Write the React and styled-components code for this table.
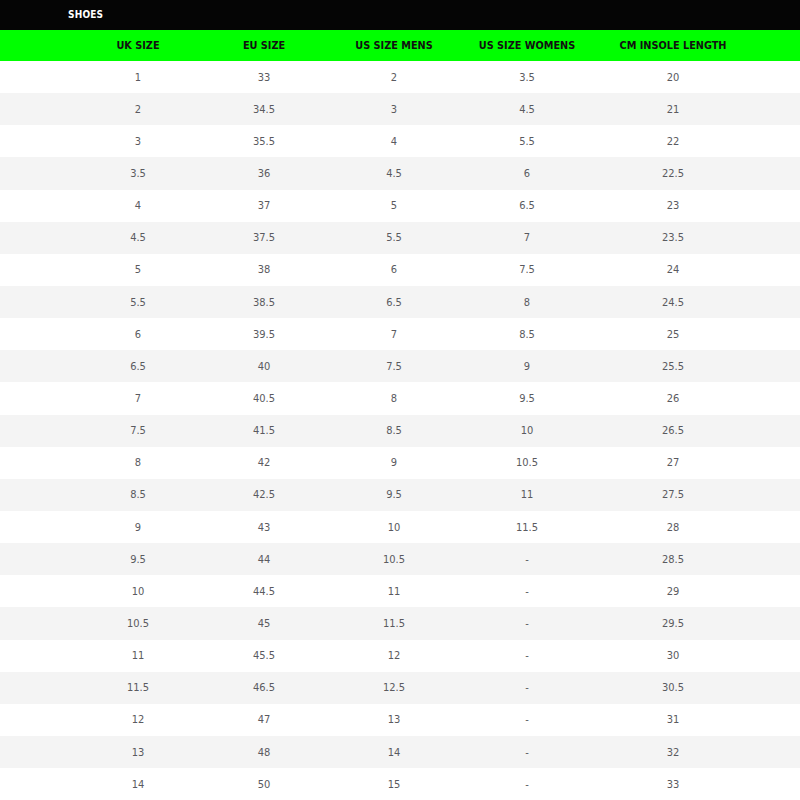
import React from "react";
import styled, { createGlobalStyle } from "styled-components";

const Global = createGlobalStyle`
  html, body { margin: 0; padding: 0; background: #fff; }
  body { font-family: "DejaVu Sans Condensed", "DejaVu Sans", sans-serif; }
`;

const Page = styled.div`
  width: 800px;
  height: 800px;
  overflow: hidden;
  background: #fff;
`;

const TopBar = styled.div`
  height: 30px;
  background: #050505;
  display: flex;
  align-items: center;
  padding-left: 68px;
  box-sizing: border-box;
`;

const Title = styled.div`
  color: #fff;
  font-weight: bold;
  font-size: 10px;
  letter-spacing: 0.2px;
  margin-top: -2px;
`;

const COLS = "68px 140px 112px 148px 118px 174px 1fr";

const HeaderRow = styled.div`
  display: grid;
  grid-template-columns: ${COLS};
  height: 31px;
  background: #00ff00;
  align-items: center;
`;

const HeadCell = styled.div`
  text-align: center;
  font-weight: bold;
  font-size: 10.8px;
  color: #111;
  letter-spacing: 0;
`;

const Row = styled.div`
  display: grid;
  grid-template-columns: ${COLS};
  height: 32.15px;
  align-items: center;
  background: ${(p) => (p.$alt ? "#f4f4f4" : "#ffffff")};
`;

const Cell = styled.div`
  text-align: center;
  font-size: 11px;
  color: #5a5a60;
`;

const headers = ["UK SIZE", "EU SIZE", "US SIZE MENS", "US SIZE WOMENS", "CM INSOLE LENGTH"];

const data = [
  ["1", "33", "2", "3.5", "20"],
  ["2", "34.5", "3", "4.5", "21"],
  ["3", "35.5", "4", "5.5", "22"],
  ["3.5", "36", "4.5", "6", "22.5"],
  ["4", "37", "5", "6.5", "23"],
  ["4.5", "37.5", "5.5", "7", "23.5"],
  ["5", "38", "6", "7.5", "24"],
  ["5.5", "38.5", "6.5", "8", "24.5"],
  ["6", "39.5", "7", "8.5", "25"],
  ["6.5", "40", "7.5", "9", "25.5"],
  ["7", "40.5", "8", "9.5", "26"],
  ["7.5", "41.5", "8.5", "10", "26.5"],
  ["8", "42", "9", "10.5", "27"],
  ["8.5", "42.5", "9.5", "11", "27.5"],
  ["9", "43", "10", "11.5", "28"],
  ["9.5", "44", "10.5", "-", "28.5"],
  ["10", "44.5", "11", "-", "29"],
  ["10.5", "45", "11.5", "-", "29.5"],
  ["11", "45.5", "12", "-", "30"],
  ["11.5", "46.5", "12.5", "-", "30.5"],
  ["12", "47", "13", "-", "31"],
  ["13", "48", "14", "-", "32"],
  ["14", "50", "15", "-", "33"],
];

export default function App() {
  return (
    <Page>
      <Global />
      <TopBar>
        <Title>SHOES</Title>
      </TopBar>
      <HeaderRow>
        <span />
        {headers.map((h) => (
          <HeadCell key={h}>{h}</HeadCell>
        ))}
        <span />
      </HeaderRow>
      {data.map((r, i) => (
        <Row key={i} $alt={i % 2 === 1}>
          <span />
          {r.map((v, j) => (
            <Cell key={j}>{v}</Cell>
          ))}
          <span />
        </Row>
      ))}
    </Page>
  );
}
